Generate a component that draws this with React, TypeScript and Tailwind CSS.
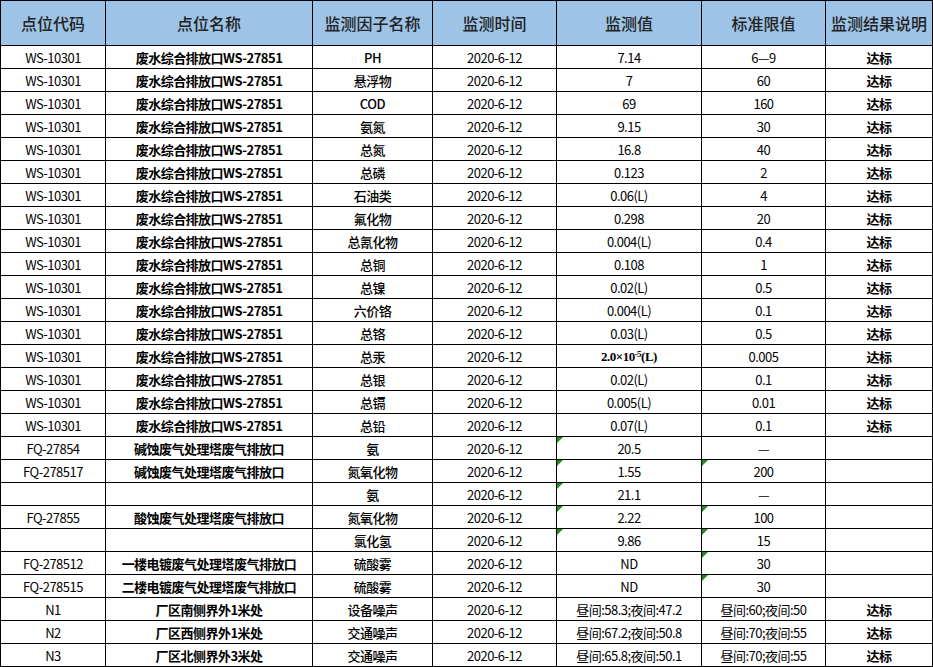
const W = 'WS-10301';
const WN = '废水综合排放口WS-27851';
const D = '2020-6-12';

type Row = [string, string, string, string, string, string, string, boolean?, boolean?];

const rows: Row[] = [
  [W, WN, 'PH', D, '7.14', '6—9', '达标'],
  [W, WN, '悬浮物', D, '7', '60', '达标'],
  [W, WN, 'COD', D, '69', '160', '达标'],
  [W, WN, '氨氮', D, '9.15', '30', '达标'],
  [W, WN, '总氮', D, '16.8', '40', '达标'],
  [W, WN, '总磷', D, '0.123', '2', '达标'],
  [W, WN, '石油类', D, '0.06(L)', '4', '达标'],
  [W, WN, '氟化物', D, '0.298', '20', '达标'],
  [W, WN, '总氰化物', D, '0.004(L)', '0.4', '达标'],
  [W, WN, '总铜', D, '0.108', '1', '达标'],
  [W, WN, '总镍', D, '0.02(L)', '0.5', '达标'],
  [W, WN, '六价铬', D, '0.004(L)', '0.1', '达标'],
  [W, WN, '总铬', D, '0.03(L)', '0.5', '达标'],
  [W, WN, '总汞', D, 'HG', '0.005', '达标'],
  [W, WN, '总银', D, '0.02(L)', '0.1', '达标'],
  [W, WN, '总镉', D, '0.005(L)', '0.01', '达标'],
  [W, WN, '总铅', D, '0.07(L)', '0.1', '达标'],
  ['FQ-27854', '碱蚀废气处理塔废气排放口', '氨', D, '20.5', '—', '', true, false],
  ['FQ-278517', '碱蚀废气处理塔废气排放口', '氮氧化物', D, '1.55', '200', '', true, true],
  ['', '', '氨', D, '21.1', '—', '', true, false],
  ['FQ-27855', '酸蚀废气处理塔废气排放口', '氮氧化物', D, '2.22', '100', '', true, true],
  ['', '', '氯化氢', D, '9.86', '15', '', true, true],
  ['FQ-278512', '一楼电镀废气处理塔废气排放口', '硫酸雾', D, 'ND', '30', '', false, true],
  ['FQ-278515', '二楼电镀废气处理塔废气排放口', '硫酸雾', D, 'ND', '30', '', false, true],
  ['N1', '厂区南侧界外1米处', '设备噪声', D, '昼间:58.3;夜间:47.2', '昼间:60;夜间:50', '达标'],
  ['N2', '厂区西侧界外1米处', '交通噪声', D, '昼间:67.2;夜间:50.8', '昼间:70;夜间:55', '达标'],
  ['N3', '厂区北侧界外3米处', '交通噪声', D, '昼间:65.8;夜间:50.1', '昼间:70;夜间:55', '达标'],
];

const widths = ['w-[105px]', 'w-[207px]', 'w-[120px]', 'w-[124px]', 'w-[145px]', 'w-[124px]', 'w-[107px]'];
const heads = ['点位代码', '点位名称', '监测因子名称', '监测时间', '监测值', '标准限值', '监测结果说明'];

function Flag() {
  return (
    <span className="absolute left-0 top-0 w-0 h-0 border-t-[6px] border-t-[#1f8a1f] border-r-[6px] border-r-transparent" />
  );
}

export default function App() {
  return (
    <div className="w-[933px] h-[667px] bg-white" style={{ fontFamily: '"Noto Sans CJK SC", "Liberation Sans", sans-serif' }}>
      <table className="table-fixed border-collapse text-[13px] text-black tracking-[-0.04em]">
        <colgroup>
          {widths.map((w, i) => <col key={i} className={w} />)}
        </colgroup>
        <thead>
          <tr className="h-[45px] bg-[#9dc3e6]">
            {heads.map((h) => (
              <th key={h} className="border border-black text-[16px] font-medium text-[#222] text-center p-0 tracking-normal">{h}</th>
            ))}
          </tr>
        </thead>
        <tbody>
          {rows.map((r, i) => (
            <tr key={i} className="h-[23px] leading-[21px]">
              <td className="border border-black text-center p-0">{r[0]}</td>
              <td className="border border-black text-center p-0 font-semibold">{r[1]}</td>
              <td className="border border-black text-center p-0 font-medium">{r[2]}</td>
              <td className="border border-black text-center p-0">{r[3]}</td>
              <td className="border border-black text-center p-0 relative">
                {r[7] && <Flag />}
                {r[4] === 'HG' ? (
                  <span className="font-bold" style={{ fontFamily: '"Liberation Serif", serif' }}>2.0×10<sup className="text-[9px]">-5</sup>(L)</span>
                ) : r[4]}
              </td>
              <td className="border border-black text-center p-0 relative">
                {r[8] && <Flag />}
                {r[5]}
              </td>
              <td className="border border-black text-center p-0 font-bold">{r[6]}</td>
            </tr>
          ))}
        </tbody>
      </table>
    </div>
  );
}
